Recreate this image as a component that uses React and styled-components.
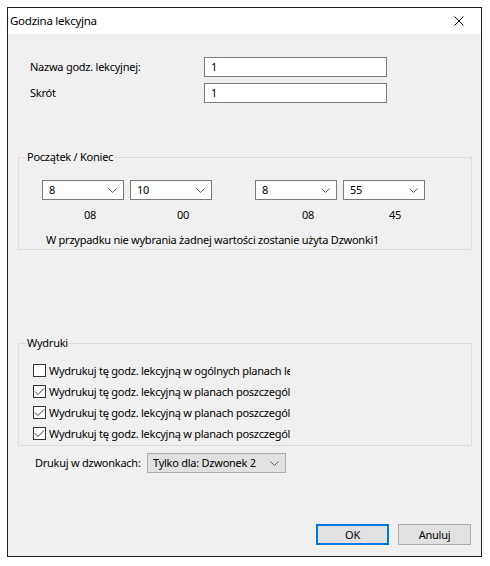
import React from "react";
import styled, { createGlobalStyle } from "styled-components";

const Global = createGlobalStyle`
  html, body { margin: 0; padding: 0; background: #ffffff; }
  body {
    font-family: "Noto Sans", "Segoe UI", sans-serif;
    font-size: 11px;
    letter-spacing: -0.25px;
    color: #000;
  }
  * { box-sizing: border-box; }
`;

const Page = styled.div`
  padding: 7px 0 0 7px;
`;

const Window = styled.div`
  width: 475px;
  height: 550px;
  border: 1px solid #1f1f1f;
  background: #f0f0f0;
  display: flex;
  flex-direction: column;
`;

const TitleBar = styled.div`
  height: 26px;
  background: #ffffff;
  display: flex;
  align-items: center;
  justify-content: space-between;
  padding-left: 2px;
  flex: none;
`;

const Title = styled.span`
  font-size: 11.5px;
  line-height: 16px;
`;

const CloseBtn = styled.div`
  width: 46px;
  height: 26px;
  display: flex;
  align-items: center;
  justify-content: center;
  margin-right: -1px;
`;

const Body = styled.div`
  flex: 1;
  display: flex;
  flex-direction: column;
  padding: 23px 9px 11px 10px;
`;

const FormRow = styled.div`
  display: grid;
  grid-template-columns: 174px 183px;
  align-items: center;
  margin-left: 12px;
  margin-top: ${(p) => p.$top || 0}px;
`;

const Label = styled.span`
  line-height: 16px;
  white-space: nowrap;
`;

const TextInput = styled.div`
  height: 20px;
  border: 1px solid #7a7a7a;
  background: #fff;
  padding: 0 0 0 6px;
  display: flex;
  align-items: center;
  line-height: 16px;
`;

const Group = styled.fieldset`
  margin: ${(p) => p.$top}px 0 0 0;
  padding: 0;
  border: 1px solid #dcdcdc;
  min-width: 0;
`;

const Legend = styled.legend`
  margin-left: 7px;
  padding: 0 1px 0 1px;
  line-height: 16px;
  font-size: 11px;
`;

const GroupInner = styled.div`
  padding: ${(p) => p.$pad};
`;

const SelectRow = styled.div`
  display: flex;
  gap: 6px;
`;

const Spacer = styled.div`
  width: 31px;
  flex: none;
`;

const ComboBox = styled.div`
  width: ${(p) => p.$w || 82}px;
  height: 20px;
  flex: none;
  border: 1px solid ${(p) => (p.$flat ? "#adadad" : "#7a7a7a")};
  background: ${(p) => (p.$flat ? "#e1e1e1" : "#ffffff")};
  display: flex;
  align-items: center;
  justify-content: space-between;
  padding: 0 6px 0 ${(p) => (p.$flat ? 5 : 6)}px;
  line-height: 16px;
  white-space: nowrap;
`;

const Chevron = () => (
  <svg width="9" height="5" viewBox="0 0 9 5">
    <polyline points="0.5,0.5 4.5,4.5 8.5,0.5" fill="none" stroke="#606060" strokeWidth="1" />
  </svg>
);

const Combo = ({ value, w, flat }) => (
  <ComboBox $w={w} $flat={flat}>
    <span>{value}</span>
    <Chevron />
  </ComboBox>
);

const TimesRow = styled.div`
  display: flex;
  margin-top: 7px;
  line-height: 16px;
`;

const TimeCell = styled.div`
  width: ${(p) => p.$w}px;
  padding-left: ${(p) => p.$indent}px;
  flex: none;
`;

const Note = styled.div`
  margin: 9px 0 0 4px;
  line-height: 16px;
`;

const CheckRow = styled.div`
  display: flex;
  align-items: center;
  height: 21px;
`;

const Box = styled.span`
  width: 13px;
  height: 13px;
  border: 1px solid #333333;
  background: #ffffff;
  flex: none;
  display: flex;
  align-items: center;
  justify-content: center;
`;

const CheckText = styled.span`
  width: 241px;
  margin-left: 3px;
  white-space: nowrap;
  overflow: hidden;
  line-height: 16px;
`;

const Check = ({ checked, children }) => (
  <CheckRow>
    <Box>
      {checked && (
        <svg width="11" height="11" viewBox="0 0 11 11">
          <polyline points="1,5.5 4,8.5 10,2.5" fill="none" stroke="#333" strokeWidth="1" />
        </svg>
      )}
    </Box>
    <CheckText>{children}</CheckText>
  </CheckRow>
);

const PrintRow = styled.div`
  display: flex;
  align-items: center;
  margin: 7px 0 0 17px;
`;

const PrintLabel = styled.span`
  width: 112px;
  line-height: 16px;
  white-space: nowrap;
`;

const Buttons = styled.div`
  margin-top: auto;
  display: flex;
  justify-content: flex-end;
  gap: 9px;
  padding-right: 1px;
`;

const Button = styled.div`
  width: 73px;
  height: 21px;
  display: flex;
  align-items: center;
  justify-content: center;
  background: #e1e1e1;
  border: ${(p) => (p.$default ? "2px solid #0078d7" : "1px solid #adadad")};
  line-height: 16px;
`;

const CHECK_TEXT = "Wydrukuj tę godz. lekcyjną w planach poszczególnych nauczycieli";

export default function App() {
  return (
    <>
      <Global />
      <Page>
        <Window>
          <TitleBar>
            <Title>Godzina lekcyjna</Title>
            <CloseBtn>
              <svg width="10" height="10" viewBox="0 0 10 10">
                <path d="M0.5 0.5 L9.5 9.5 M9.5 0.5 L0.5 9.5" stroke="#000" strokeWidth="1" fill="none" />
              </svg>
            </CloseBtn>
          </TitleBar>
          <Body>
            <FormRow>
              <Label>Nazwa godz. lekcyjnej:</Label>
              <TextInput>1</TextInput>
            </FormRow>
            <FormRow $top={6}>
              <Label>Skrót</Label>
              <TextInput>1</TextInput>
            </FormRow>

            <Group $top={46}>
              <Legend>Początek / Koniec</Legend>
              <GroupInner $pad="15px 0 1px 23px">
                <SelectRow>
                  <Combo value="8" />
                  <Combo value="10" />
                  <Spacer />
                  <Combo value="8" />
                  <Combo value="55" />
                </SelectRow>
                <TimesRow>
                  <TimeCell $w={88} $indent={42}>08</TimeCell>
                  <TimeCell $w={124} $indent={47}>00</TimeCell>
                  <TimeCell $w={87} $indent={48}>08</TimeCell>
                  <TimeCell $w={88} $indent={48}>45</TimeCell>
                </TimesRow>
                <Note>W przypadku nie wybrania żadnej wartości zostanie użyta Dzwonki1</Note>
              </GroupInner>
            </Group>

            <Group $top={85}>
              <Legend>Wydruki</Legend>
              <GroupInner $pad="9px 0 1px 14px">
                <Check>Wydrukuj tę godz. lekcyjną w ogólnych planach lekcji</Check>
                <Check checked>{CHECK_TEXT}</Check>
                <Check checked>{CHECK_TEXT}</Check>
                <Check checked>{CHECK_TEXT}</Check>
              </GroupInner>
            </Group>

            <PrintRow>
              <PrintLabel>Drukuj w dzwonkach:</PrintLabel>
              <Combo value="Tylko dla: Dzwonek 2" w={139} flat />
            </PrintRow>

            <Buttons>
              <Button $default>OK</Button>
              <Button>Anuluj</Button>
            </Buttons>
          </Body>
        </Window>
      </Page>
    </>
  );
}
